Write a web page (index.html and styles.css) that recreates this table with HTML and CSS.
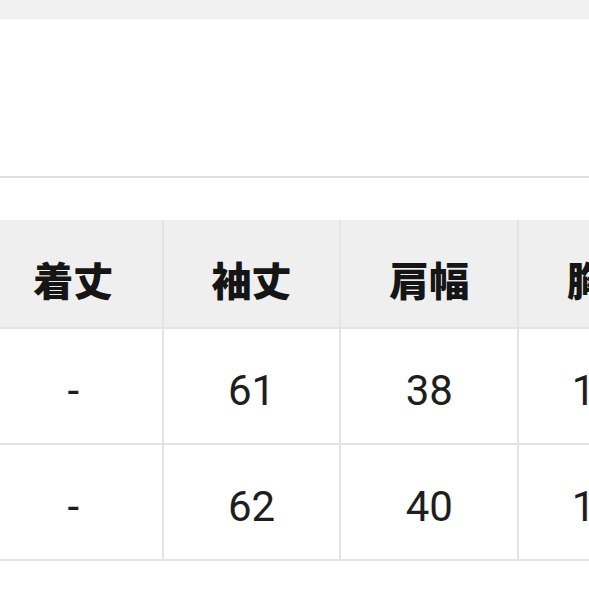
FILE: index.html
```html
<!DOCTYPE html>
<html lang="ja">
<head>
<meta charset="utf-8">
<link rel="stylesheet" href="styles.css">
</head>
<body>
<div class="topbar"></div>
<div class="section"></div>
<div class="table-wrap">
  <table class="size-table">
    <thead>
      <tr>
        <th>着丈</th>
        <th>袖丈</th>
        <th>肩幅</th>
        <th>胸囲</th>
      </tr>
    </thead>
    <tbody>
      <tr>
        <td>-</td>
        <td>61</td>
        <td>38</td>
        <td>110</td>
      </tr>
      <tr>
        <td>-</td>
        <td>62</td>
        <td>40</td>
        <td>114</td>
      </tr>
    </tbody>
  </table>
</div>
</body>
</html>
```
FILE: styles.css
```css
html, body {
  margin: 0;
  padding: 0;
  background: #ffffff;
  overflow: hidden;
  width: 589px;
  height: 589px;
}

.topbar {
  height: 19px;
  background: #f0f0f0;
}

.section {
  height: 157px;
  border-bottom: 2px solid #dedede;
  background: #ffffff;
}

.table-wrap {
  margin-top: 42px;
  margin-left: -15px;
  width: 800px;
}

.size-table {
  border-collapse: collapse;
  table-layout: fixed;
  width: 712px;
}

.size-table th,
.size-table td {
  width: 176px;
  border: 2px solid #e4e4e4;
  text-align: center;
  padding: 0;
  color: #1e1e1e;
}

.size-table tr > :first-child {
  border-left: none;
}

.size-table th {
  height: 108px;
  background: #efefef;
  border-top: none;
  font-family: "Noto Sans CJK JP", sans-serif;
  font-weight: 900;
  font-size: 40px;
  line-height: 1;
  padding-top: 10px;
  box-sizing: border-box;
  color: #151515;
}

.size-table td {
  height: 116px;
  box-sizing: border-box;
  font-family: Roboto, "Liberation Sans", sans-serif;
  font-weight: 400;
  font-size: 42px;
  line-height: 1;
  padding-top: 10px;
}
```
